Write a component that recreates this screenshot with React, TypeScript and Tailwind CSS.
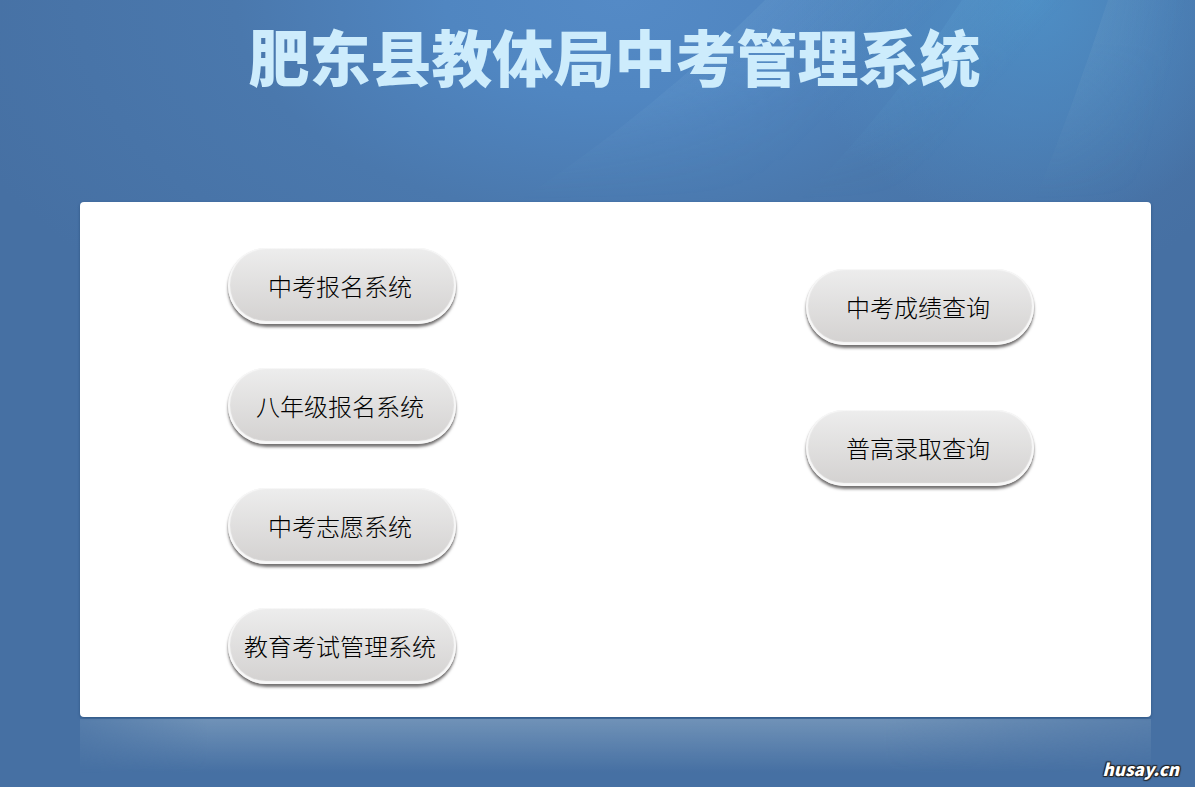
import React from "react";

interface SystemLink {
  label: string;
  href: string;
}

const systems: SystemLink[] = [
  { label: "中考报名系统", href: "#signup" },
  { label: "八年级报名系统", href: "#grade8" },
  { label: "中考志愿系统", href: "#volunteer" },
  { label: "教育考试管理系统", href: "#exam" },
];

const queries: SystemLink[] = [
  { label: "中考成绩查询", href: "#score" },
  { label: "普高录取查询", href: "#admission" },
];

const PillLink = ({ item }: { item: SystemLink }) => {
  return (
    <a href={item.href} className="block h-20 w-[230px] px-px pb-1">
      <span className="flex h-full w-full items-center justify-center whitespace-nowrap rounded-full bg-linear-to-b from-[#ededed] to-[#d3d1d0] pr-1 text-2xl font-light text-black shadow-[inset_0_-1px_1px_2px_#f8f8f8,0_3px_3px_0_#777575,0_1px_1px_0_#a5a3a3]">
        {item.label}
      </span>
    </a>
  );
};

const Backdrop = () => {
  return (
    <svg
      className="absolute inset-0 -z-10 h-full w-full"
      viewBox="0 0 1195 787"
      preserveAspectRatio="none"
      aria-hidden="true"
    >
      <defs>
        <radialGradient id="glow" gradientUnits="userSpaceOnUse" cx="0" cy="0" r="1" gradientTransform="translate(620 0) scale(700 400)">
          <stop offset="0" stopColor="#548ac6" />
          <stop offset="0.25" stopColor="#5086c1" />
          <stop offset="0.55" stopColor="#4a78ad" />
          <stop offset="1" stopColor="#4670a3" />
        </radialGradient>
        <radialGradient id="cyan" gradientUnits="userSpaceOnUse" cx="0" cy="0" r="1" gradientTransform="translate(1030 0) scale(240 230)">
          <stop offset="0" stopColor="#4e91c8" stopOpacity="0.9" />
          <stop offset="0.5" stopColor="#4e8cc4" stopOpacity="0.6" />
          <stop offset="1" stopColor="#4e8cc4" stopOpacity="0" />
        </radialGradient>
        <linearGradient id="ray" gradientUnits="userSpaceOnUse" x1="690" y1="40" x2="800" y2="150">
          <stop offset="0" stopColor="#8fbfe2" stopOpacity="0.15" />
          <stop offset="1" stopColor="#8fbfe2" stopOpacity="0" />
        </linearGradient>
        <linearGradient id="ray2" gradientUnits="userSpaceOnUse" x1="935" y1="25" x2="1000" y2="80">
          <stop offset="0" stopColor="#6ab0dc" stopOpacity="0.16" />
          <stop offset="1" stopColor="#6ab0dc" stopOpacity="0" />
        </linearGradient>
        <linearGradient id="ray3" gradientUnits="userSpaceOnUse" x1="1090" y1="30" x2="1175" y2="50">
          <stop offset="0" stopColor="#8fb4cf" stopOpacity="0.14" />
          <stop offset="1" stopColor="#8fb4cf" stopOpacity="0" />
        </linearGradient>
        <linearGradient id="down" x1="0" y1="0" x2="0" y2="1">
          <stop offset="0.2" stopColor="#fff" />
          <stop offset="1" stopColor="#000" />
        </linearGradient>
        <mask id="fade">
          <rect width="1195" height="200" fill="url(#down)" />
        </mask>
      </defs>
      <rect width="1195" height="787" fill="#4670a3" />
      <rect width="1195" height="400" fill="url(#glow)" />
      <rect x="700" width="495" height="240" fill="url(#cyan)" />
      <g mask="url(#fade)">
        <path d="M765 0H1195V200H520Q655 110 765 0Z" fill="url(#ray)" />
        <path d="M962 0H1195V200H800Q890 110 962 0Z" fill="url(#ray2)" />
        <path d="M1108 0H1195V200H1035Q1075 100 1108 0Z" fill="url(#ray3)" />
      </g>
    </svg>
  );
};

const App = () => {
  return (
    <div className="relative isolate flex min-h-screen flex-col overflow-hidden font-['Noto_Sans_CJK_SC',sans-serif]">
      <Backdrop />
      <header className="flex h-[202px] justify-center pt-3.5 pl-[34px]">
        <h1 className="whitespace-nowrap text-[61px] leading-[84px] font-black text-[#cdecfc]">
          肥东县教体局中考管理系统
        </h1>
      </header>

      <main className="mr-11 ml-20">
        <div className="flex justify-between rounded bg-white pt-[46px] pr-[116px] pb-[29px] pl-[147px] shadow-[0_1px_3px_#2f5581]">
          <nav aria-label="系统" className="flex flex-col gap-10">
            {systems.map((item) => (
              <PillLink key={item.label} item={item} />
            ))}
          </nav>
          <nav aria-label="查询" className="flex flex-col gap-[61px] pt-[21px]">
            {queries.map((item) => (
              <PillLink key={item.label} item={item} />
            ))}
          </nav>
        </div>
      </main>

      <footer className="relative pt-0.5">
        {/* reflection under the panel */}
        <div className="mr-11 ml-20 h-[60px] bg-linear-to-b from-[#7092b7] to-[#4670a3]/0 to-90% mask-[linear-gradient(to_right,#0006,#000_12%,#000_75%,#0007)]" />
        <p className="absolute right-4 bottom-0 text-[17px] leading-5 font-black text-white italic [text-shadow:1px_1px_1px_#222,-1px_-1px_1px_#222,1px_-1px_1px_#222,-1px_1px_1px_#222]">
          husay.cn
        </p>
      </footer>
    </div>
  );
};

export default App;
